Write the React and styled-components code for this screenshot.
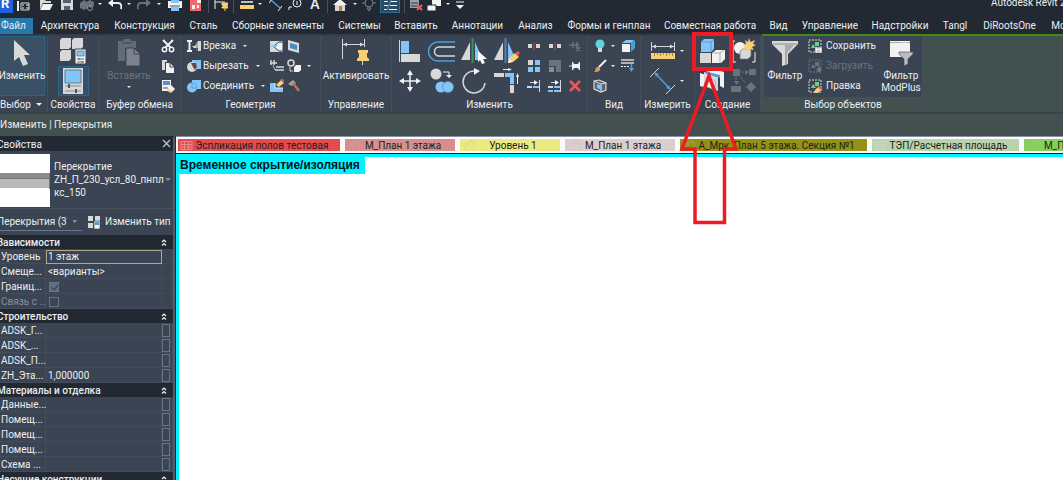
import React from "react";
import styled, { createGlobalStyle, css } from "styled-components";

const BLUE = "#84c5f7";
const GREY = "#d8d8d8";
const WHITE = "#f2f2f2";
const YELLOW = "#f8cf74";
const DIM = "#6b727d";

const GlobalStyle = createGlobalStyle`
  * { box-sizing: border-box; }
  html, body, #root { height: 100%; }
  body {
    margin: 0;
    overflow: hidden;
    background: #425050;
    color: #eceef0;
    font: 10px/12px Roboto, "Noto Sans", sans-serif;
  }
  button, input, select { font: inherit; color: inherit; margin: 0; }
  svg { display: block; flex: none; }
`;

const Page = styled.div`
  position: relative;
  display: flex;
  flex-direction: column;
  height: 100%;
  overflow: hidden;
`;

const Plain = styled.button`
  display: flex;
  align-items: center;
  justify-content: center;
  padding: 0;
  border: 0;
  background: none;
  white-space: nowrap;
  &:disabled {
    color: #6b727d;
  }
`;

/* title bar */

const TitleBar = styled.header`
  display: flex;
  align-items: flex-start;
  justify-content: space-between;
  flex: none;
  height: 18px;
  overflow: hidden;
  background: #222933;
`;

const QuickAccess = styled.div`
  display: flex;
  flex: none;
`;

const QuickButton = styled(Plain)`
  width: ${(p) => p.$w}px;
  height: 13px;
  align-items: flex-start;
  ${(p) =>
    p.$active &&
    css`
      background: #2b4a60;
      border: 1px solid #2b6d91;
      border-top: 0;
    `}
`;

const QuickDivider = styled.span`
  display: flex;
  justify-content: center;
  width: ${(p) => p.$w}px;
  height: 13px;
  &::after {
    content: "";
    width: 1px;
    background: #4a525e;
  }
`;

const Logo = styled.span`
  width: 13px;
  height: 13px;
  padding-left: 1px;
  background: #1e62e0;
  color: #fff;
  font-size: 13px;
  font-weight: 700;
  line-height: 8px;
`;

const WindowTitle = styled.span`
  flex: none;
  width: 72px;
  overflow: hidden;
  line-height: 6px;
  white-space: nowrap;
`;

/* ribbon */

const TabBar = styled.nav`
  display: flex;
  flex: none;
  height: 18px;
  overflow: hidden;
  background: #222933;
  border-bottom: 2px solid #333c49;
`;

const RibbonTab = styled(Plain)`
  flex: none;
  width: ${(p) => p.$w}px;
  height: 16px;
  ${(p) =>
    p.$file &&
    css`
      justify-content: flex-start;
      padding-left: 1px;
      background: #2878ae;
    `}
`;

const GreenLine = styled.div`
  position: absolute;
  top: 34px;
  left: 762px;
  right: 0;
  height: 2px;
  background: #408a1c;
`;

const Ribbon = styled.section`
  display: flex;
  flex: none;
  height: 78px;
  background: #425050;
  border-bottom: 2px solid #38424f;
`;

const Panel = styled.div`
  display: flex;
  flex-direction: column;
  flex: none;
  width: ${(p) => p.$w}px;
  background: ${(p) => (p.$context ? "#425050" : "#3b4453")};
  border-right: 1px solid #454f5b;
  margin-left: ${(p) => (p.$context ? 3 : 0)}px;
`;

const PanelBody = styled.div`
  display: flex;
  flex: none;
  height: 61px;
  padding-left: ${(p) => p.$pad || 0}px;
  gap: ${(p) => p.$gap || 0}px;
  justify-content: ${(p) => (p.$center ? "center" : "flex-start")};
  background: #3b4453;
`;

const PanelTitle = styled.div`
  display: flex;
  align-items: center;
  justify-content: ${(p) => (p.$left ? "flex-start" : "center")};
  gap: 5px;
  height: 15px;
  white-space: nowrap;
`;

const BigButton = styled(Plain)`
  flex-direction: column;
  justify-content: flex-start;
  width: ${(p) => p.$w}px;
  height: 60px;
  padding-top: 2px;
  gap: 2px;
  ${(p) =>
    p.$active &&
    css`
      background: #3a5065;
      border: 1px solid #2b6587;
      border-left: 0;
      padding-top: 1px;
    `}
`;

const Stack = styled.div`
  display: flex;
  flex-direction: column;
  justify-content: ${(p) => (p.$top ? "flex-start" : "space-around")};
  flex: none;
  width: ${(p) => p.$w || 20}px;
  height: 60px;
`;

const SmallButton = styled(Plain)`
  height: 20px;
  justify-content: ${(p) => (p.$left ? "flex-start" : "center")};
  gap: ${(p) => p.$gap || 2}px;
`;

const ToolButton = styled(Plain)`
  height: 30px;
  gap: 4px;
  ${(p) =>
    p.$active &&
    css`
      background: #3a5065;
      border: 1px solid #2b6587;
    `}
`;

const Caret = styled.span`
  flex: none;
  width: 0;
  height: 0;
  margin-left: ${(p) => p.$ml || 0}px;
  margin-top: ${(p) => p.$mt || 0}px;
  border: ${(p) => (p.$big ? 3 : 2)}px solid transparent;
  border-top-color: ${(p) => (p.$dim ? "#7d8795" : "#eceef0")};
  border-bottom: 0;
`;

const OptionsBar = styled.div`
  display: flex;
  align-items: center;
  flex: none;
  height: 22px;
  background: #425050;
`;

/* properties palette */

const Workspace = styled.main`
  display: flex;
  flex: 1;
  min-height: 0;
`;

const Palette = styled.aside`
  flex: none;
  width: 175px;
  overflow: hidden;
  background: #3b4453;
  border-right: 2px solid #525c69;
  border-top: 1px solid #222933;
`;

const PaletteHeader = styled.div`
  display: flex;
  align-items: center;
  justify-content: space-between;
  height: 14px;
  padding-right: 2px;
  background: #222933;
`;

const Clipped = styled.span`
  margin-left: -3px;
  padding-top: 1px;
  white-space: nowrap;
`;

const TypeSelector = styled.button`
  display: flex;
  align-items: center;
  width: 100%;
  height: 58px;
  padding: 0;
  border: 0;
  border-bottom: 1px solid #485261;
  background: none;
  text-align: left;
`;

const TypeName = styled.span`
  width: 115px;
  padding-left: 4px;
  line-height: 13px;
  white-space: pre-line;
`;

const FilterRow = styled.div`
  display: flex;
  align-items: center;
  height: 26px;
`;

const FilterSelect = styled.select`
  appearance: none;
  width: 82px;
  height: 18px;
  margin-right: 5px;
  padding: 0 15px 0 0;
  border: 0;
  border-bottom: 1px solid #68778c;
  border-radius: 0;
  background: linear-gradient(45deg, transparent 50%, #7d8795 50%) 72px 7px / 3px 3px no-repeat,
    linear-gradient(-45deg, transparent 50%, #7d8795 50%) 75px 7px / 3px 3px no-repeat;
  text-indent: -3px;
`;

const PropTable = styled.table`
  width: 173px;
  table-layout: fixed;
  border-collapse: collapse;
  th,
  td {
    height: 15px;
    padding: 0;
    line-height: 14px;
    font-weight: 400;
    text-align: left;
    white-space: nowrap;
    overflow: hidden;
    box-shadow: inset 0 -1px #424c5b, inset -1px 0 #424c5b;
  }
  th {
    padding: 1px 0 0 1px;
  }
`;

const CategoryRow = styled.tr`
  && th {
    height: 14px;
    padding: 0;
    background: #222933;
    box-shadow: none;
  }
`;

const CategoryHead = styled.div`
  display: flex;
  align-items: center;
  justify-content: space-between;
  height: 14px;
  padding-right: 5px;
  font-weight: 500;
`;

const PropRow = styled.tr`
  color: ${(p) => (p.$dim ? "#868e99" : "inherit")};
`;

const ValueInput = styled.input`
  display: block;
  width: 100%;
  height: 14px;
  padding: 1px 1px 0;
  border: 1px solid ${(p) => (p.$focus ? "#b3a68f" : "transparent")};
  background: none;
  outline: 0;
`;

const Check = styled.input`
  appearance: none;
  display: block;
  width: 10px;
  height: 10px;
  margin-left: 3px;
  border: 1px solid #697484;
  &:checked {
    background: #626d7c;
  }
  &:checked::after {
    content: "";
    display: block;
    width: 3px;
    height: 6px;
    margin: 0 3px;
    border: solid #343c48;
    border-width: 0 1px 1px 0;
    transform: rotate(40deg);
  }
`;

const AssocButton = styled.button`
  display: block;
  width: 8px;
  height: 13px;
  padding: 0;
  border: 1px solid #66758a;
  background: none;
`;

/* drawing area */

const ViewArea = styled.section`
  display: flex;
  flex-direction: column;
  flex: 1;
  min-width: 0;
  border-left: 1px solid #222933;
`;

const ViewTabs = styled.div`
  display: flex;
  flex: none;
  gap: 5px;
  height: 18px;
  padding: 2px 0 2px 2px;
  overflow: hidden;
  background: #fbfbfd;
  border-bottom: 1px solid #1d2430;
  border-top: 1px solid #8a90a2;
`;

const ViewTab = styled(Plain)`
  flex: none;
  width: ${(p) => p.$w}px;
  padding: 1px 9px 0 2px;
  background: ${(p) => p.$color};
  color: #1e1e1e;
  overflow: hidden;
  span {
    flex: 1;
    text-align: center;
  }
`;

const Canvas = styled.div`
  flex: 1;
  background: #fff;
  border-top: 3px solid #00f2ff;
  border-left: 3px solid #00f2ff;
`;

const IsolateLabel = styled.div`
  width: max-content;
  height: 17px;
  padding: 0 5px 0 1px;
  background: #00f2ff;
  color: #05141c;
  font: bold 12px/16px "Liberation Sans", sans-serif;
`;

const Markup = styled.svg`
  position: absolute;
  top: 30px;
  left: 676px;
  pointer-events: none;
`;

/* icons */

const Svg = ({ w = 14, h = 14, children }) => (
  <svg width={w} height={h} viewBox={`0 0 ${w} ${h}`} fill="none" aria-hidden="true">
    {children}
  </svg>
);

const CursorIcon = () => (
  <Svg w={26} h={30}>
    <path d="M5 2v21l5-4 4 9 5-2-4-9h6z" fill={GREY} />
  </Svg>
);

const Family = ({ x, y, s = 10 }) => (
  <path d={`M${x} ${y + 2}l2-2h${s - 2}v${s - 2}l-2 2h${2 - s}z`} fill={GREY} />
);

const TypePropsIcon = () => (
  <Svg w={28} h={28}>
    <Family x={1} y={1} s={11} />
    <Family x={13} y={1} s={11} />
    <Family x={1} y={13} s={11} />
    <path d="M16 12h11v15H16z" fill={WHITE} stroke="#3b4453" />
    <path d="M18 14h7v5h-7z" fill={BLUE} stroke="#2f5d86" strokeWidth=".6" />
    <path d="M18 22h7M18 25h7M20 21v2M23 24v2" stroke="#444" strokeWidth=".8" />
  </Svg>
);

const PropertiesIcon = () => (
  <Svg w={22} h={28}>
    <path d="M1 1h20v26H1z" fill={GREY} />
    <path d="M3 3h16v13H3z" fill={BLUE} stroke="#557f9f" />
    <path d="M3 19h16M3 24h16" stroke="#888" />
    <path d="M7 17v4M14 22v4" stroke="#555" strokeWidth="2" />
  </Svg>
);

const PasteIcon = () => (
  <Svg w={24} h={30}>
    <path d="M1 3h5l1-2h6l1 2h5v7H8v13H1z" fill="#646b77" />
    <path d="M5 5h10" stroke="#3b4453" />
    <path d="M9 10h8l6 6v12H9z" fill="#7d838d" stroke="#3b4453" />
    <path d="M17 10v6h6" stroke="#3b4453" />
  </Svg>
);

const CutIcon = () => (
  <Svg>
    <path d="M2 1l8 8M12 1L4 9" stroke={WHITE} strokeWidth="2" />
    <circle cx="3.5" cy="10.5" r="2.2" stroke={WHITE} strokeWidth="1.5" />
    <circle cx="10.5" cy="10.5" r="2.2" stroke={WHITE} strokeWidth="1.5" />
  </Svg>
);

const CopyIcon = () => (
  <Svg>
    <path d="M1 1h5v2H4v8H1z" fill={GREY} />
    <path d="M5 4h4l4 4v6H5z" fill={WHITE} />
    <path d="M9 4v4h4" stroke="#3b4453" />
  </Svg>
);

const MatchIcon = () => (
  <Svg>
    <path d="M1 1h9v11H1z" fill={WHITE} />
    <path d="M2 2h7v4H2z" fill="#5a93bf" />
    <path d="M2 9h5" stroke="#555" />
    <path d="M7 9l3-3 4 4-3 3z" fill={WHITE} />
    <path d="M7 9l4 4-1 1-4-2z" fill={YELLOW} />
  </Svg>
);

const CopeIcon = () => (
  <Svg>
    <path d="M0 2h5M0 12h5M2.5 2v10" stroke={WHITE} strokeWidth="2" />
    <path d="M5 7h3l3-5h3v10h-3v-3H7" fill={GREY} />
    <path d="M10 3v9" stroke="#777" />
  </Svg>
);

const CutGeomIcon = () => (
  <Svg>
    <path d="M5 1h9v9H5z" fill={BLUE} />
    <circle cx="5" cy="8" r="5" fill={GREY} />
    <path d="M4 4h5l1 4-2 3-2-3z" fill="#6e4444" />
  </Svg>
);

const JoinIcon = () => (
  <Svg>
    <path d="M5 1h9v9H5z" fill={BLUE} />
    <circle cx="5" cy="8.5" r="5" fill={BLUE} />
    <path d="M5 4a4.500 4.500 0 0 1 5 5H5z" stroke="#5da6de" />
  </Svg>
);

const SplitFaceIcon = () => (
  <Svg>
    <path d="M0 2h13v11H0z" fill={GREY} />
    <path d="M13 3v9H9L4 8V7l5-4z" fill={WHITE} stroke="#3b4453" />
    <path d="M1 7h6" stroke={BLUE} strokeWidth="2" />
  </Svg>
);

const WallOpeningIcon = () => (
  <Svg>
    <path d="M1 1l11 3v10L1 11z" fill={GREY} />
    <path d="M3 4l7 2v5l-7-2z" fill="#3f8fc9" />
  </Svg>
);

const WallJoinIcon = () => (
  <Svg>
    <path d="M1 1v5M4 1v5M0 4h7M6 8h8M5 11h9" stroke={GREY} strokeWidth="1.4" />
    <path d="M3 6l2 5" stroke={BLUE} />
  </Svg>
);

const ComponentsIcon = () => (
  <Svg>
    <circle cx="4" cy="4" r="3" stroke={GREY} strokeWidth="1.5" />
    <path d="M7 8l2-2h5v5l-2 2H7z" fill={WHITE} />
    <path d="M3 8v4h3" stroke={GREY} />
  </Svg>
);

const PaintIcon = () => (
  <Svg>
    <path d="M0 4h5v5h8v4H0z" fill={BLUE} />
    <path d="M5 4v5h8" stroke={WHITE} />
    <path d="M6 6l5-5 3 3-5 4z" fill={YELLOW} />
    <path d="M11 0l3 3" stroke="#e8524f" strokeWidth="2" />
  </Svg>
);

const HammerIcon = () => (
  <Svg>
    <path d="M1 5l5-4 3 3-4 3z" fill="#a9a3a0" />
    <path d="M6 4l6 8" stroke="#b9745a" strokeWidth="2.5" />
  </Svg>
);

const ActivateIcon = () => (
  <Svg w={30} h={30}>
    <path d="M1.5 1v20M23.5 1v8M2 6.5h21" stroke={GREY} />
    <path d="M2 6.500l4-2v4zM23 6.500l-4-2v4z" fill={GREY} />
    <path d="M17 12h10v3h-1v4l2 2v2H16v-2l2-2v-4h-1z" fill={YELLOW} />
    <path d="M21.5 23v4" stroke={GREY} />
  </Svg>
);

const AlignIcon = () => (
  <Svg w={24} h={24}>
    <path d="M1.5 1v22" stroke={GREY} />
    <path d="M3 2h8v12H3z" fill={BLUE} />
    <path d="M3 15h19v8H3z" fill={GREY} />
  </Svg>
);

const OffsetIcon = () => (
  <Svg w={28} h={24}>
    <path d="M27 3H10a9 9 0 0 0 0 19h17" stroke="#4d9fdc" strokeWidth="1.500" />
    <path d="M27 8H11a4.500 4.500 0 0 0 0 9h16" stroke={GREY} strokeWidth="1.500" />
  </Svg>
);

const MirrorPickIcon = () => (
  <Svg w={28} h={26}>
    <path d="M10 4v18H1z" fill={GREY} />
    <path d="M15 4v18h8z" fill={BLUE} />
    <path d="M12.5 0v25" stroke="#3f8f62" strokeWidth="2" />
    <path d="M18 13v11l2-2 2 4 3-1-2-4h4z" fill="#fff" />
  </Svg>
);

const MirrorDrawIcon = () => (
  <Svg w={28} h={26}>
    <path d="M10 4v18H1z" fill={GREY} />
    <path d="M15 4v18h8z" fill={BLUE} />
    <path d="M12.5 0v25" stroke="#4f86b4" strokeWidth="2" />
    <path d="M15 25l1-5 6-5 4 4-6 5z" fill={YELLOW} />
    <path d="M22 15l3-2 2 2-2 3z" fill="#e8524f" />
    <path d="M15 25l1-4 3 3z" fill="#fff" />
  </Svg>
);

const MoveIcon = () => (
  <Svg w={24} h={24}>
    <path d="M12 4v16M4 12h16" stroke={WHITE} strokeWidth="1.500" />
    <path d="M12 1l3 5H9zM12 23l3-5H9zM1 12l5-3v6zM23 12l-5-3v6z" fill={WHITE} />
  </Svg>
);

const CopyToolIcon = () => (
  <Svg w={24} h={26}>
    <circle cx="6" cy="6" r="5.5" fill={GREY} />
    <path d="M13 4h6v5" stroke={WHITE} />
    <path d="M16 7h6l-3 3z" fill={WHITE} />
    <circle cx="11" cy="19" r="5.5" fill={BLUE} />
    <circle cx="18" cy="19" r="5.5" fill={BLUE} stroke="#4d90c2" strokeWidth=".7" />
  </Svg>
);

const RotateIcon = () => (
  <Svg w={26} h={26}>
    <path d="M14 3a11 11 0 1 0 10 12" stroke={GREY} strokeWidth="1.500" />
    <path d="M13 0l6 3-6 4z" fill={WHITE} />
  </Svg>
);

const TrimIcon = () => (
  <Svg w={26} h={26}>
    <path d="M0 5h10v4H0zM16 17h4v8h-4z" fill={GREY} />
    <path d="M11 5h9v11h-4V9h-5z" fill={BLUE} />
    <path d="M9 1.500h6M23.500 8v8" stroke={WHITE} />
    <path d="M14 0l4 1.500L14 3zM22 9l1.500-4L25 9z" fill={WHITE} />
  </Svg>
);

const SplitIcon = () => (
  <Svg>
    <path d="M1 5h4v4H1zM9 5h4v4H9z" fill={GREY} />
    <path d="M7 3v8" stroke="#c2484d" />
  </Svg>
);

const UnpinIcon = () => (
  <Svg>
    <path d="M1 6h4M5 3v6M9 3v6M5 6h6M8 8l4 4M12 8l-4 4" stroke={DIM} strokeWidth="1.500" />
  </Svg>
);

const ArrayIcon = () => (
  <Svg>
    <path d="M1 1h5v5H1z" fill={GREY} />
    <path d="M8 1h5v5H8zM1 8h5v5H1zM8 8h5v5H8z" fill={BLUE} />
  </Svg>
);

const ScaleIcon = () => (
  <Svg>
    <path d="M1 1h12v12H8V7H1z" fill={DIM} />
    <path d="M1 8h5v5H1z" fill="#858b94" />
  </Svg>
);

const PinIcon = () => (
  <Svg>
    <path d="M1 7h4" stroke={GREY} />
    <path d="M4 3h1l1 2h4l1-2h1v8h-1l-1-2H6l-1 2H4z" fill={WHITE} />
  </Svg>
);

const ExtendIcon = ({ multi }) => (
  <Svg>
    <path d="M12.5 1v12M3 3.5h5" stroke={GREY} />
    <path d="M7 1l4 2.500L7 6z" fill={WHITE} />
    <path d="M0 8h5" stroke={GREY} strokeWidth="2" />
    <path d="M6 8h6" stroke={BLUE} strokeWidth="2" />
    {multi && <path d="M0 12h5M6 12h6" stroke={BLUE} strokeWidth="2" />}
  </Svg>
);

const DeleteIcon = () => (
  <Svg>
    <path d="M2 2l10 10M12 2L2 12" stroke="#f0565a" strokeWidth="2.5" />
  </Svg>
);

const BulbIcon = () => (
  <Svg>
    <circle cx="7" cy="5" r="4.5" fill="#5fd3e0" />
    <path d="M5 9h4v4H5z" fill={GREY} />
  </Svg>
);

const BrushIcon = () => (
  <Svg>
    <path d="M13 1L6 8" stroke={WHITE} strokeWidth="2" />
    <path d="M1 13c2-1 1-4 3-5 2-1 4 1 3 3s-4 2-6 2z" fill="#d69a5c" />
  </Svg>
);

const ViewBoxIcon = () => (
  <Svg>
    <path d="M1 4l4-3h8l-3 3z" fill={BLUE} />
    <path d="M1 5h8v8H1z" fill={WHITE} />
    <path d="M10 4l4-3v8l-4 4z" fill="#4d9fdc" />
  </Svg>
);

const LineworkIcon = () => (
  <Svg>
    <path d="M0 1h13M0 4h13" stroke={GREY} strokeWidth="1.500" />
    <path d="M0 7.500h8" stroke={WHITE} strokeDasharray="2 1" />
    <path d="M10.500 5v6" stroke="#4d9fdc" strokeWidth="1.500" />
    <path d="M8 9h5l-2.500 4z" fill="#4d9fdc" />
  </Svg>
);

const SelectionBoxIcon = () => (
  <Svg>
    <path d="M1 2l5-1 7 3v7l-5 2-7-3z" stroke={GREY} strokeWidth="1.2" fill="#5a6675" />
    <path d="M1 2l7 3v8M8 5l5-1" stroke={GREY} />
    <path d="M4 5l5 2v4l-5-2z" fill={BLUE} />
  </Svg>
);

const RulerIcon = () => (
  <Svg w={26} h={20}>
    <path d="M1.500 1v9M24.500 1v9M2 5.500h22" stroke={GREY} />
    <path d="M2 5.500l4-2v4zM24 5.500l-4-2v4z" fill={GREY} />
    <path d="M1 12h24v6H1z" fill={YELLOW} />
    <path d="M4.500 12v3M7.500 12v2M10.500 12v3M13.500 12v2M16.500 12v3M19.500 12v2M22.500 12v3" stroke="#8a6d2d" strokeWidth=".7" />
  </Svg>
);

const AlignedDimIcon = () => (
  <Svg w={26} h={26}>
    <path d="M0 9l9-9M16 26l9-9" stroke={GREY} />
    <path d="M5 5l15 16" stroke="#4d9fdc" strokeWidth="1.500" />
    <path d="M4 4l5 2-3 3zM21 22l-5-2 3-3z" fill="#4d9fdc" />
  </Svg>
);

const CreateFamilyIcon = () => (
  <Svg w={26} h={26}>
    <path d="M2 4l3-3h10v10l-3 3H2z" fill={BLUE} />
    <path d="M2 4h10v10M12 4l3-3" stroke="#4d9fdc" />
    <path d="M1 15h11v10H1z" fill={GREY} />
    <path d="M13 15l4-3h9v9l-4 4h-9z" fill={WHITE} />
    <path d="M13 15h8v10M21 15l4-3" stroke="#aaa" />
  </Svg>
);

const CreateGroupIcon = () => (
  <Svg w={24} h={26}>
    <path d="M3 3H1v21h3M20 24h3V14" stroke={WHITE} />
    <circle cx="8" cy="10" r="6" fill={WHITE} />
    <path d="M8 13l3-2h8v7l-3 3H8z" fill={GREY} stroke="#777" strokeWidth=".7" />
    <path d="M17 0l1.500 4L23 2l-2 4 3 1-4 2 2 3-4-1-1 3-2-3-4 1 2-4-3-1 4-1-1-4 3 2z" fill={YELLOW} />
  </Svg>
);

const AssemblyIcon = () => (
  <Svg w={26} h={26}>
    <path d="M1 5l6 2v13l-6-2z" fill={WHITE} />
    <path d="M5 4l14 5v14L5 18z" fill={GREY} />
    <path d="M7 3l14 3v4L7 6z" fill="#4d9fdc" />
    <path d="M9 0l16 4v16l-4-2V7L9 4z" fill={WHITE} />
    <path d="M8 9l8 4v9l-8-3z" fill={WHITE} stroke="#888" strokeWidth=".6" />
  </Svg>
);

const PartsIcon = () => (
  <Svg w={26} h={26}>
    <path d="M2 1h7v7H2zM18 1h7v6h-7zM0 18h10v6H0zM20 14l5 5-5 5-5-5z" fill={DIM} />
    <path d="M10 4h6M5 9v7M9 9l6 6" stroke={DIM} strokeDasharray="3 1" />
    <path d="M14 2l4 2-4 3zM3 13h5l-2 4z" fill={DIM} />
  </Svg>
);

const FunnelIcon = () => (
  <Svg w={28} h={30}>
    <path d="M1 3h26v3L17 16v10l-6 2V16L1 6z" fill={GREY} />
    <path d="M2 6h24" stroke="#8d8d8d" />
    <path d="M14 7h9l-7 8v11l-2 1z" fill="#a9a9a9" />
  </Svg>
);

const ModPlusIcon = () => (
  <Svg w={24} h={30}>
    <path d="M1 3h20v16H1z" fill={WHITE} />
    <path d="M1 4.500h20" stroke="#aaa" strokeDasharray="12 1 2 1" />
    <path d="M10 14h14v2l-5 5v5l-4 2v-7l-5-5z" fill="#bdbdbd" stroke="#3b4453" strokeWidth=".6" />
  </Svg>
);

const SelectionIcon = ({ kind }) => {
  const off = kind === "load";
  return (
    <Svg>
      <path d="M1 1h12v12H1z" stroke={off ? DIM : GREY} strokeDasharray="2 1" />
      <path d="M3 9l2-4 3 4zM7 3h4v4H7z" fill={off ? DIM : "#62d28f"} />
      {kind === "save" && <path d="M7 8h7v6H7zM9 9h3M9 12h3" fill={WHITE} stroke="#666" strokeWidth=".6" />}
      {kind === "load" && <path d="M11 7v4M9 10h4l-2 3z" stroke="#858b94" />}
      {kind === "edit" && (
        <>
          <path d="M6 14l1-3 4-4 3 3-4 4z" fill={YELLOW} />
          <path d="M10 7l3 3" stroke="#e8524f" strokeWidth="2" />
        </>
      )}
    </Svg>
  );
};

const EditTypeIcon = () => (
  <Svg>
    <path d="M1 1h5v5H1zM8 1h5v5H8zM1 8h5v5H1z" fill={GREY} />
    <path d="M7 6h6v8H7z" fill={WHITE} stroke="#444" strokeWidth=".7" />
    <path d="M8 7h4v3H8z" fill="#4d9fdc" />
  </Svg>
);

const CollapseIcon = () => (
  <Svg w={8} h={9}>
    <path d="M2 4l2-2 2 2M2 7.500l2-2 2 2" stroke={WHITE} strokeWidth="1.200" />
  </Svg>
);

const CloseIcon = () => (
  <Svg w={10} h={10}>
    <path d="M2 1l7 7M9 1L2 8" stroke="#c4c8ce" strokeWidth="1.200" />
  </Svg>
);

const SlabPreview = () => (
  <Svg w={50} h={54}>
    <path d="M0 1h50v53H0z" fill="#fff" />
    <path d="M0 20h50v5H0z" fill="#8b8b8b" />
    <path d="M0 26h50v9H0z" fill="#b9b9b9" />
    <path d="M0 25.500h50M49.500 20v16" stroke="#777" />
  </Svg>
);

const ViewIcon = ({ kind }) => (
  <svg width="13" height="11" viewBox="0 0 13 11" fill="none" opacity=".45" aria-hidden="true">
    {kind === "table" ? (
      <path d="M1 1.500h11v8H1zM1 4.500h11M1 7h11M4.500 1v9M8.500 1v9" stroke="#ddd" />
    ) : (
      <path d="M3 10V4h3V2h6v8M6 4v2M9 2V0" stroke="#bbb" strokeDasharray="2 1" />
    )}
  </svg>
);

const quickItems = [
  { w: 22, label: "Главная", icon: <><path d="M1 1v10" stroke={WHITE} strokeWidth="2" /><path d="M4 3h8v7H4z" stroke={GREY} /><path d="M5 5h2M9 5h3M5 8h2M9 8h3" stroke={WHITE} /></> },
  { w: 22, label: "Открыть", icon: <><path d="M1 9V0h5l1 1h5v2H4z" fill={GREY} /><path d="M4 4h10l-3 6H1z" fill={WHITE} /></> },
  { w: 20, label: "Сохранить", icon: <><path d="M1 0h12v10H1z" fill={GREY} /><path d="M3 0h8v3H3zM4 6h6v4H4z" fill="#555d68" /></> },
  { w: 19, label: "Синхронизировать", icon: <><path d="M0 3l4-3 4 3v5L4 10 0 8zM6 2l4-2 4 2v4l-4 2z" fill="#6a717c" /><circle cx="10" cy="8" r="2.5" stroke="#8b919b" /></> },
  { w: 8, caret: true },
  { w: 21, label: "Отменить", icon: <><path d="M4 3h6c3 0 4 3 3 6" stroke={WHITE} strokeWidth="2" /><path d="M0 3l5-4v8z" fill={WHITE} /></> },
  { w: 8, caret: true },
  { w: 22, label: "Повторить", icon: <><path d="M10 3H4C1 3 0 6 1 9" stroke={DIM} strokeWidth="2" /><path d="M14 3L9-1v8z" fill={DIM} /></> },
  { w: 8, caret: true },
  { w: 23, label: "Печать", icon: <><path d="M0 1h14v7H0z" fill={WHITE} /><path d="M3 0h8v3H3zM3 7h8v4H3z" fill={BLUE} /><path d="M2 6h10" stroke="#4b5563" /></> },
  { w: 17, label: "PDF", icon: <><path d="M2 0h11v11H2z" fill="#ef6a70" /><path d="M9 0h4v3H9z" fill={WHITE} /><path d="M4 5h3v4H4zM9 5h2v3H9z" fill={WHITE} /></> },
  { w: 10, divider: true },
  { w: 15, label: "Закрепить размеры", icon: <><path d="M1 0v9M1 2h10" stroke={WHITE} /><path d="M8 3h6v2h-1v2h1v1H8V7h1V5H8zM11 8v3" fill={YELLOW} stroke={YELLOW} /></> },
  { w: 10, divider: true },
  { w: 17, label: "Измерить", icon: <><path d="M1 2h12" stroke={WHITE} strokeWidth="1.5" /><path d="M0 5h14v4H0z" fill={YELLOW} /></> },
  { w: 10, caret: true },
  { w: 21, label: "Размер", icon: <><path d="M2 0l9 8" stroke="#4d9fdc" strokeWidth="1.5" /><path d="M9 11l4-5M0 3l3-4" stroke={WHITE} /></> },
  { w: 18, label: "Марка", icon: <><circle cx="9" cy="3" r="4" stroke={WHITE} /><path d="M9 1v4M4 7H1v3" stroke={WHITE} /></> },
  { w: 22, label: "Текст", text: "A" },
  { w: 2, divider: true },
  { w: 24, label: "3D вид", icon: <><path d="M0 5l7-6 7 6H0z" fill={WHITE} /><path d="M2 5h10v6H2z" fill={GREY} /><path d="M6 6h3v5H6z" fill="#b5823f" /></> },
  { w: 6, caret: true },
  { w: 22, label: "Разрез", icon: <><circle cx="7" cy="3" r="4" stroke="#7b828c" /><path d="M0 3h3M11 3h3M5 8l2 3 2-3z" stroke="#7b828c" /></> },
  { w: 20, label: "Тонкие линии", active: true, icon: <><path d="M1 1.500h4M8 1.500h6M1 5.500h4M7 5.500h7M1 9.500h3M6 9.500h8" stroke={WHITE} /><path d="M8 0L4 10" stroke="#4d9fdc" /></> },
  { w: 8, divider: true },
  { w: 16, label: "Закрыть неактивные", icon: <><path d="M1 0h9v8H1z" fill="#9aa0a9" /><path d="M2 3h7M2 6h7" stroke="#333" /><path d="M8 5l5 5M13 5l-5 5" stroke="#f0565a" strokeWidth="2" /></> },
  { w: 20, label: "Переключить окна", icon: <><path d="M5 0h9v6H5z" fill={WHITE} /><path d="M0 5h9v6H0z" fill={WHITE} stroke="#222933" /></> },
  { w: 8, caret: true },
  { w: 16, label: "Настройка", icon: <><path d="M3 2h8" stroke={WHITE} /><path d="M3 5h8l-4 4z" fill={WHITE} /></> },
];

const ribbonTabs = [
  ["Файл", 33], ["Архитектура", 74], ["Конструкция", 75], ["Сталь", 43], ["Сборные элементы", 106],
  ["Системы", 57], ["Вставить", 56], ["Аннотации", 67], ["Анализ", 49], ["Формы и генплан", 98],
  ["Совместная работа", 104], ["Вид", 33], ["Управление", 70], ["Надстройки", 70], ["Tangl", 40],
  ["DiRootsOne", 69], ["ModPlus", 54],
];

const viewTabs = [
  ["Эспликация полов тестовая", 162, "#e54b4b", "table"],
  ["М_План 1 этажа", 110, "#d98e8e", "plan"],
  ["Уровень 1", 100, "#ebea80", "plan"],
  ["М_План 1 этажа", 110, "#dccdce", "plan"],
  ["А_Мрк_План 5 этажа. Секция №1", 187, "#959114", "plan"],
  ["ТЭП/Расчетная площадь", 147, "#b9d3ac", "table"],
  ["М_План 2 этажа", 110, "#86cf5a", "plan"],
];

const properties = [
  {
    title: "Зависимости",
    rows: [
      { name: "Уровень", value: "1 этаж", focus: true },
      { name: "Смеще...", value: "<варианты>" },
      { name: "Границ...", check: true, checked: true },
      { name: "Связь с ...", check: true, dim: true },
    ],
  },
  {
    title: "Строительство",
    rows: [
      { name: "ADSK_Г...", value: "", assoc: true },
      { name: "ADSK_...", value: "", assoc: true },
      { name: "ADSK_П...", value: "", assoc: true },
      { name: "ZH_Эта...", value: "1,000000", assoc: true },
    ],
  },
  {
    title: "Материалы и отделка",
    rows: ["Данные...", "Помещ...", "Помещ...", "Помещ...", "Схема ..."].map((name) => ({
      name,
      value: "",
      assoc: true,
    })),
  },
  { title: "Несущие конструкции", rows: [] },
];

const Letter = styled.span`
  font-size: 14px;
  font-weight: 500;
  line-height: 9px;
`;

const QuickItem = ({ item }) => {
  if (item.divider) return <QuickDivider $w={item.w} />;
  if (item.caret) {
    return (
      <QuickButton $w={item.w} aria-label="Ещё">
        <Caret $mt={3} />
      </QuickButton>
    );
  }
  return (
    <QuickButton $w={item.w} $active={item.active} aria-label={item.label}>
      {item.text ? <Letter>{item.text}</Letter> : <Svg w={14} h={11}>{item.icon}</Svg>}
    </QuickButton>
  );
};

const IconStack = ({ w, items, label }) => (
  <Stack $w={w}>
    {items.map((icon, i) => (
      <SmallButton key={i} aria-label={`${label} ${i + 1}`}>{icon}</SmallButton>
    ))}
  </Stack>
);

const ToolStack = ({ w, items, label }) => (
  <Stack $w={w}>
    {items.map((icon, i) => (
      <ToolButton key={i} aria-label={`${label} ${i + 1}`}>{icon}</ToolButton>
    ))}
  </Stack>
);

const RibbonPanels = () => (
  <Ribbon>
    <Panel $w={48}>
      <PanelBody>
        <BigButton $w={45} $active>
          <CursorIcon />
          Изменить
        </BigButton>
      </PanelBody>
      <PanelTitle $left>Выбор <Caret $big /></PanelTitle>
    </Panel>

    <Panel $w={51}>
      <PanelBody $center>
        <Stack $w={31}>
          <ToolButton aria-label="Свойства типа"><TypePropsIcon /></ToolButton>
          <ToolButton $active aria-label="Свойства"><PropertiesIcon /></ToolButton>
        </Stack>
      </PanelBody>
      <PanelTitle>Свойства</PanelTitle>
    </Panel>

    <Panel $w={82}>
      <PanelBody $pad={8} $gap={8}>
        <BigButton $w={44} disabled>
          <PasteIcon />
          Вставить
          <Caret $mt={2} />
        </BigButton>
        <IconStack w={18} label="Буфер" items={[<CutIcon />, <CopyIcon />, <MatchIcon />]} />
      </PanelBody>
      <PanelTitle>Буфер обмена</PanelTitle>
    </Panel>

    <Panel $w={140}>
      <PanelBody $pad={6}>
        <Stack $w={80}>
          <SmallButton $left><CopeIcon />Врезка<Caret $ml={5} /></SmallButton>
          <SmallButton $left><CutGeomIcon />Вырезать<Caret $ml={5} /></SmallButton>
          <SmallButton $left><JoinIcon />Соединить<Caret $ml={5} /></SmallButton>
        </Stack>
        <IconStack w={20} label="Грань" items={[<SplitFaceIcon />, <WallJoinIcon />, <PaintIcon />]} />
        <Stack $w={28}>
          <SmallButton $left aria-label="Проем"><WallOpeningIcon /></SmallButton>
          <SmallButton $left aria-label="Компоненты"><ComponentsIcon /><Caret $ml={4} /></SmallButton>
          <SmallButton $left aria-label="Снести"><HammerIcon /></SmallButton>
        </Stack>
      </PanelBody>
      <PanelTitle>Геометрия</PanelTitle>
    </Panel>

    <Panel $w={71}>
      <PanelBody $center>
        <BigButton $w={66}>
          <ActivateIcon />
          Активировать
        </BigButton>
      </PanelBody>
      <PanelTitle>Управление</PanelTitle>
    </Panel>

    <Panel $w={196}>
      <PanelBody $pad={2}>
        <ToolStack w={32} label="Правка" items={[<AlignIcon />, <MoveIcon />]} />
        <ToolStack w={32} label="Копия" items={[<OffsetIcon />, <CopyToolIcon />]} />
        <ToolStack w={32} label="Поворот" items={[<MirrorPickIcon />, <RotateIcon />]} />
        <ToolStack w={33} label="Обрезка" items={[<MirrorDrawIcon />, <TrimIcon />]} />
        <IconStack w={21} label="Разделить" items={[<SplitIcon />, <ArrayIcon />, <ExtendIcon />]} />
        <IconStack w={21} label="Масштаб" items={[<SplitIcon />, <ScaleIcon />, <ExtendIcon multi />]} />
        <IconStack w={20} label="Закрепить" items={[<UnpinIcon />, <PinIcon />, <DeleteIcon />]} />
      </PanelBody>
      <PanelTitle>Изменить</PanelTitle>
    </Panel>

    <Panel $w={53}>
      <PanelBody $pad={5}>
        <Stack $w={28}>
          <SmallButton $left $gap={4} aria-label="Скрыть"><BulbIcon /><Caret /></SmallButton>
          <SmallButton $left $gap={4} aria-label="Переопределить"><BrushIcon /><Caret /></SmallButton>
          <SmallButton $left aria-label="Рамка"><SelectionBoxIcon /></SmallButton>
        </Stack>
        <Stack $w={14} $top>
          <SmallButton aria-label="Сечение"><ViewBoxIcon /></SmallButton>
          <SmallButton aria-label="Линии"><LineworkIcon /></SmallButton>
        </Stack>
      </PanelBody>
      <PanelTitle>Вид</PanelTitle>
    </Panel>

    <Panel $w={54}>
      <PanelBody $pad={7}>
        <Stack $w={38}>
          <ToolButton aria-label="Измерить"><RulerIcon /><Caret /></ToolButton>
          <ToolButton aria-label="Размер"><AlignedDimIcon /><Caret /></ToolButton>
        </Stack>
      </PanelBody>
      <PanelTitle>Измерить</PanelTitle>
    </Panel>

    <Panel $w={66}>
      <PanelBody $pad={2}>
        <ToolStack w={30} label="Создать" items={[<CreateFamilyIcon />, <AssemblyIcon />]} />
        <ToolStack w={34} label="Группа" items={[<CreateGroupIcon />, <PartsIcon />]} />
      </PanelBody>
      <PanelTitle>Создание</PanelTitle>
    </Panel>

    <Panel $w={159} $context>
      <PanelBody $gap={3} $pad={1}>
        <BigButton $w={40}>
          <FunnelIcon />
          Фильтр
        </BigButton>
        <Stack $w={70}>
          <SmallButton $left $gap={4}><SelectionIcon kind="save" />Сохранить</SmallButton>
          <SmallButton $left $gap={4} disabled><SelectionIcon kind="load" />Загрузить</SmallButton>
          <SmallButton $left $gap={4}><SelectionIcon kind="edit" />Правка</SmallButton>
        </Stack>
        <BigButton $w={40}>
          <ModPlusIcon />
          <span>Фильтр<br />ModPlus</span>
        </BigButton>
      </PanelBody>
      <PanelTitle>Выбор объектов</PanelTitle>
    </Panel>
  </Ribbon>
);

const PropertyRow = ({ row }) => (
  <PropRow $dim={row.dim}>
    <th scope="row">{row.name}</th>
    <td>
      {row.check ? (
        <Check type="checkbox" defaultChecked={row.checked} disabled aria-label={row.name} />
      ) : (
        <ValueInput defaultValue={row.value} $focus={row.focus} aria-label={row.name} />
      )}
    </td>
    <td>{row.assoc && <AssocButton aria-label="Связать параметр" />}</td>
  </PropRow>
);

const PropertiesPalette = () => (
  <Palette>
    <PaletteHeader>
      <Clipped>Свойства</Clipped>
      <Plain aria-label="Закрыть"><CloseIcon /></Plain>
    </PaletteHeader>
    <TypeSelector>
      <SlabPreview />
      <TypeName>{"Перекрытие\nZH_П_230_усл_80_пнпл\nкс_150"}</TypeName>
      <Caret $big $dim />
    </TypeSelector>
    <FilterRow>
      <FilterSelect aria-label="Категория">
        <option>Перекрытия (3)</option>
      </FilterSelect>
      <SmallButton $gap={4}><EditTypeIcon />Изменить тип</SmallButton>
    </FilterRow>
    <PropTable>
      <colgroup>
        <col style={{ width: 46 }} />
        <col />
        <col style={{ width: 11 }} />
      </colgroup>
      {properties.map((group) => (
        <tbody key={group.title}>
          <CategoryRow>
            <th colSpan={3}>
              <CategoryHead>
                <Clipped>{group.title}</Clipped>
                <CollapseIcon />
              </CategoryHead>
            </th>
          </CategoryRow>
          {group.rows.map((row, i) => (
            <PropertyRow key={i} row={row} />
          ))}
        </tbody>
      ))}
    </PropTable>
  </Palette>
);

const App = () => (
  <>
    <GlobalStyle />
    <Page>
      <TitleBar>
        <QuickAccess>
          <Logo>R</Logo>
          {quickItems.map((item, i) => (
            <QuickItem key={i} item={item} />
          ))}
        </QuickAccess>
        <WindowTitle>Autodesk Revit 2022</WindowTitle>
      </TitleBar>
      <TabBar>
        {ribbonTabs.map(([name, w], i) => (
          <RibbonTab key={name} $w={w} $file={i === 0}>{name}</RibbonTab>
        ))}
      </TabBar>
      <GreenLine />
      <RibbonPanels />
      <OptionsBar>Изменить | Перекрытия</OptionsBar>
      <Workspace>
        <PropertiesPalette />
        <ViewArea>
          <ViewTabs>
            {viewTabs.map(([name, w, color, kind], i) => (
              <ViewTab key={i} $w={w} $color={color}>
                <ViewIcon kind={kind} />
                <span>{name}</span>
              </ViewTab>
            ))}
          </ViewTabs>
          <Canvas>
            <IsolateLabel>Временное скрытие/изоляция</IsolateLabel>
          </Canvas>
        </ViewArea>
      </Workspace>
      <Markup width="64" height="196" viewBox="0 0 64 196" fill="none" stroke="#ed1c24">
        <path d="M18 4h37v35H18z" strokeWidth="4" />
        <path d="M33 46L60 119H48.500V192.500H19V119H6z" strokeWidth="3.500" />
      </Markup>
    </Page>
  </>
);

export default App;
